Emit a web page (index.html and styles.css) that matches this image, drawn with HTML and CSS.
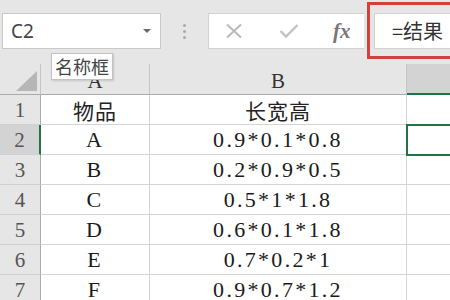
FILE: index.html
```html
<!DOCTYPE html>
<html lang="zh-CN">
  <head>
    <meta charset="UTF-8" />
    <title>C2 - 名称框</title>
    <link rel="stylesheet" href="styles.css">
  </head>
  <body>
    <div class="sheet">
      <div class="toolbar">
        <div class="name-box">
          <span>C2</span>
          <span class="caret"></span>
        </div>
        <div class="grip">
          <span></span><span></span><span></span>
        </div>
        <div class="fx-buttons">
          <svg width="20" height="16" viewBox="0 0 20 16">
            <path d="M3 1.5 L17 14.5 M17 1.5 L3 14.5" stroke="#b9b9b9" stroke-width="2" fill="none" />
          </svg>
          <svg width="20" height="16" viewBox="0 0 20 16">
            <path d="M1.5 8 L7 13.5 L18.5 2" stroke="#c2c2c2" stroke-width="2.4" fill="none" />
          </svg>
          <span class="fx">fx</span>
        </div>
        <div class="formula">=结果</div>
        <div class="highlight"></div>
      </div>

      <div class="grid">
        <div class="corner"><span class="corner-mark"></span></div>
        <div class="col-head">A</div>
        <div class="col-head">B</div>
        <div class="col-head selected">&nbsp;</div>

        <div class="row-head">1</div>
        <div class="cell cjk">物品</div>
        <div class="cell cjk">长宽高</div>
        <div class="cell"></div>

        <div class="row-head selected">2</div>
        <div class="cell">A</div>
        <div class="cell">0.9*0.1*0.8</div>
        <div class="cell active"></div>

        <div class="row-head">3</div>
        <div class="cell">B</div>
        <div class="cell">0.2*0.9*0.5</div>
        <div class="cell"></div>

        <div class="row-head">4</div>
        <div class="cell">C</div>
        <div class="cell">0.5*1*1.8</div>
        <div class="cell"></div>

        <div class="row-head">5</div>
        <div class="cell">D</div>
        <div class="cell">0.6*0.1*1.8</div>
        <div class="cell"></div>

        <div class="row-head">6</div>
        <div class="cell">E</div>
        <div class="cell">0.7*0.2*1</div>
        <div class="cell"></div>

        <div class="row-head">7</div>
        <div class="cell">F</div>
        <div class="cell">0.9*0.7*1.2</div>
        <div class="cell"></div>
      </div>

      <div class="tooltip">名称框</div>
    </div>
  </body>
</html>
```

FILE: styles.css
```css
body {
  margin: 0;
  background-color: #e6e6e6;
  font-family: "Noto Sans", "Noto Sans CJK SC", sans-serif;
  overflow: hidden;
}
.sheet {
  position: relative;
  width: 450px;
  height: 300px;
  overflow: hidden;
}
.toolbar {
  position: relative;
  display: flex;
  align-items: flex-start;
  height: 64px;
  padding-top: 13px;
  box-sizing: border-box;
}
.toolbar > * {
  flex-shrink: 0;
}
.name-box {
  display: flex;
  align-items: center;
  box-sizing: border-box;
  width: 159px;
  height: 36px;
  margin-left: 2px;
  padding-left: 8px;
  background-color: #fff;
  border: 1px solid #c9c9c9;
  color: #444;
  font-size: 19px;
}
.caret {
  margin-left: auto;
  margin-right: 9px;
  border-left: 4px solid transparent;
  border-right: 4px solid transparent;
  border-top: 4px solid #6a6a6a;
}
.grip {
  display: flex;
  flex-direction: column;
  align-items: center;
  gap: 3px;
  width: 47px;
  padding-top: 11px;
}
.grip span {
  width: 3px;
  height: 3px;
  border-radius: 50%;
  background-color: #a9a9a9;
}
.fx-buttons {
  display: flex;
  align-items: center;
  gap: 35px;
  box-sizing: border-box;
  width: 156px;
  height: 36px;
  padding-left: 15px;
  background-color: #fff;
  border: 1px solid #d2d2d2;
  border-right: none;
}
.fx {
  font-family: "Liberation Serif", serif;
  font-style: italic;
  font-weight: bold;
  font-size: 21px;
  color: #777;
  margin-left: -1px;
}
.formula {
  box-sizing: border-box;
  width: 120px;
  height: 36px;
  margin-left: 10px;
  padding-left: 17px;
  background-color: #fff;
  border: 1px solid #d2d2d2;
  color: #333;
  font-family: "Noto Sans CJK SC", sans-serif;
  font-size: 20px;
  line-height: 34px;
}
.highlight {
  position: absolute;
  left: 367px;
  top: 2px;
  width: 120px;
  height: 57px;
  box-sizing: border-box;
  border: 3px solid #d4413d;
}
.grid {
  display: grid;
  grid-template-columns: 41px 109px 257px 100px;
  grid-template-rows: 31px repeat(7, 30px);
}
.corner,
.col-head {
  box-sizing: border-box;
  background-color: #e6e6e6;
  border-right: 1px solid #c4c4c4;
  border-bottom: 1px solid #ababab;
}
.corner {
  display: flex;
  justify-content: flex-end;
  align-items: flex-end;
  padding: 0 3px 3px 0;
}
.corner-mark {
  width: 21px;
  height: 20px;
  background-color: #b6b6b6;
  clip-path: polygon(100% 0, 100% 100%, 0 100%);
}
.col-head {
  text-align: center;
  font-family: "Liberation Serif", serif;
  font-size: 21px;
  line-height: 34px;
  color: #333;
}
.col-head.selected {
  background-color: #d3d3d3;
  border-bottom: 2px solid #217346;
}
.row-head {
  box-sizing: border-box;
  background-color: #e6e6e6;
  border-right: 1px solid #ababab;
  border-bottom: 1px solid #d0d0d0;
  text-align: center;
  font-family: "Liberation Serif", serif;
  font-size: 21px;
  line-height: 30px;
  color: #555;
}
.row-head.selected {
  background-color: #d3d3d3;
  border-right: 2px solid #217346;
}
.cell {
  box-sizing: border-box;
  background-color: #fff;
  border-right: 1px solid #d4d4d4;
  border-bottom: 1px solid #d4d4d4;
  text-align: center;
  font-family: "Liberation Serif", "Noto Sans CJK SC", serif;
  font-size: 22px;
  letter-spacing: 2.3px;
  line-height: 30px;
  color: #1a1a1a;
}
.cell.cjk {
  font-family: "Noto Sans CJK SC", sans-serif;
  font-size: 21px;
  letter-spacing: 1px;
  color: #222;
}
.cell.active {
  position: relative;
  outline: 2px solid #217346;
  outline-offset: -1px;
}
.tooltip {
  position: absolute;
  left: 51px;
  top: 53px;
  box-sizing: border-box;
  height: 27px;
  padding: 0 3px;
  background-color: #fff;
  border: 1px solid #c2c2c2;
  box-shadow: 1px 1px 2px rgba(0, 0, 0, 0.15);
  color: #444;
  font-family: "Noto Sans CJK SC", sans-serif;
  font-size: 18px;
  line-height: 24px;
}
```
